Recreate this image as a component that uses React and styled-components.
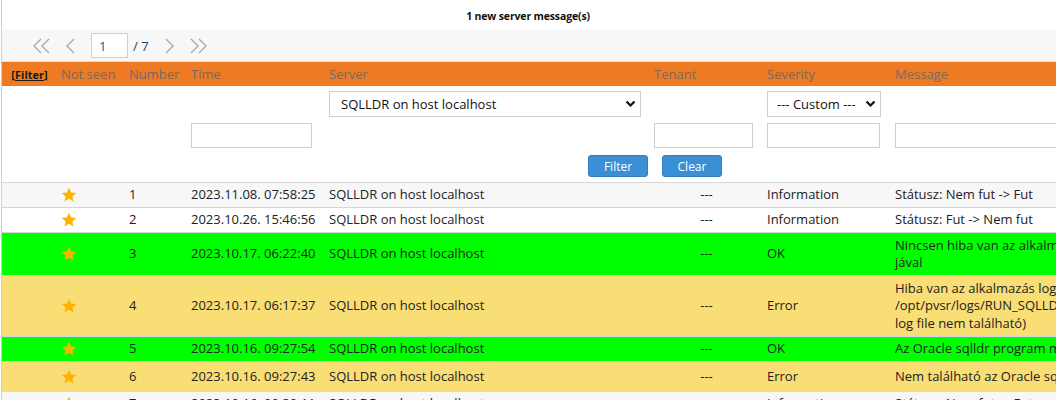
import React from "react";
import styled, { createGlobalStyle } from "styled-components";

const GlobalStyle = createGlobalStyle`
  html, body {
    margin: 0;
    padding: 0;
    background: #fff;
    overflow: hidden;
  }
  body {
    font-family: "Open Sans", "Liberation Sans", sans-serif;
    font-size: 13px;
    color: #222;
  }
`;

const rows = [
  { n: 1, time: "2023.11.08. 07:58:25", sev: "Information", bg: "#f7f7f7", h: 25, msg: ["Státusz: Nem fut -> Fut"] },
  { n: 2, time: "2023.10.26. 15:46:56", sev: "Information", bg: "#ffffff", h: 25, msg: ["Státusz: Fut -> Nem fut"] },
  { n: 3, time: "2023.10.17. 06:22:40", sev: "OK", bg: "#00ff00", h: 43, msg: ["Nincsen hiba van az alkalmazás log file-", "jával"] },
  { n: 4, time: "2023.10.17. 06:17:37", sev: "Error", bg: "#f9dd75", h: 61, msg: ["Hiba van az alkalmazás log file-jával (", "/opt/pvsr/logs/RUN_SQLLDR.log: a", "log file nem található)"] },
  { n: 5, time: "2023.10.16. 09:27:54", sev: "OK", bg: "#00ff00", h: 25, msg: ["Az Oracle sqlldr program megtalálható"] },
  { n: 6, time: "2023.10.16. 09:27:43", sev: "Error", bg: "#f9dd75", h: 30, msg: ["Nem található az Oracle sqlldr program"] },
  { n: 7, time: "2023.10.16. 09:20:11", sev: "Information", bg: "#f7f7f7", h: 25, msg: ["Státusz: Nem fut -> Fut"] },
];

const cols = [55, 68, 62, 138, 325, 113, 128, 417];

export default function App() {
  return (
    <>
      <GlobalStyle />
      <Wrapper>
        <Title>1 new server message(s)</Title>
        <Pager>
          <PagerIcon width="18" height="16" viewBox="0 0 18 16">
            <polyline points="8,1 1,8 8,15" />
            <polyline points="16,1 9,8 16,15" />
          </PagerIcon>
          <PagerIcon width="10" height="16" viewBox="0 0 10 16">
            <polyline points="8,1 1,8 8,15" />
          </PagerIcon>
          <PageInput defaultValue="1" />
          <PageCount>/ 7</PageCount>
          <PagerIcon width="10" height="16" viewBox="0 0 10 16">
            <polyline points="2,1 9,8 2,15" />
          </PagerIcon>
          <PagerIcon width="18" height="16" viewBox="0 0 18 16">
            <polyline points="2,1 9,8 2,15" />
            <polyline points="10,1 17,8 10,15" />
          </PagerIcon>
        </Pager>

        <Table>
          <colgroup>
            {cols.map((w, i) => (
              <col key={i} style={{ width: w }} />
            ))}
          </colgroup>
          <thead>
            <HeadRow>
              <HeadCell $center>
                <FilterLink>
                  [<u>Filter</u>]
                </FilterLink>
              </HeadCell>
              <HeadCell>Not seen</HeadCell>
              <HeadCell>Number</HeadCell>
              <HeadCell>Time</HeadCell>
              <HeadCell>Server</HeadCell>
              <HeadCell>Tenant</HeadCell>
              <HeadCell>Severity</HeadCell>
              <HeadCell>Message</HeadCell>
            </HeadRow>
          </thead>
          <tbody>
            <tr>
              <FilterCell />
              <FilterCell />
              <FilterCell />
              <FilterCell>
                <Slot />
                <TextInput $w={121} />
              </FilterCell>
              <FilterCell>
                <Slot>
                  <SelectWrap $w={312}>
                    <Select defaultValue="sqlldr">
                      <option value="sqlldr">SQLLDR on host localhost</option>
                    </Select>
                    <Caret />
                  </SelectWrap>
                </Slot>
              </FilterCell>
              <FilterCell>
                <Slot />
                <TextInput $w={99} />
              </FilterCell>
              <FilterCell>
                <Slot>
                  <SelectWrap $w={114}>
                    <Select defaultValue="custom" $center>
                      <option value="custom">--- Custom ---</option>
                    </Select>
                    <Caret />
                  </SelectWrap>
                </Slot>
                <TextInput $w={113} />
              </FilterCell>
              <FilterCell>
                <Slot />
                <TextInput $w={300} />
              </FilterCell>
            </tr>
            <tr>
              <ButtonCell colSpan={8}>
                <Button>Filter</Button>
                <Button>Clear</Button>
              </ButtonCell>
            </tr>
            {rows.map((r) => (
              <DataRow key={r.n} $bg={r.bg} $h={r.h}>
                <Cell />
                <Cell>
                  <Star />
                </Cell>
                <Cell>{r.n}</Cell>
                <Cell>{r.time}</Cell>
                <Cell>SQLLDR on host localhost</Cell>
                <Cell $center>---</Cell>
                <Cell>{r.sev}</Cell>
                <Cell>
                  {r.msg.map((line, i) => (
                    <MsgLine key={i}>{line}</MsgLine>
                  ))}
                </Cell>
              </DataRow>
            ))}
          </tbody>
        </Table>
      </Wrapper>
    </>
  );
}

function Star() {
  return (
    <StarSvg width="16" height="16" viewBox="0 0 24 24">
      <path d="M12 1.2l3.2 7 7.6.8-5.7 5.1 1.7 7.6L12 17.8l-6.8 3.9 1.7-7.6-5.7-5.1 7.6-.8z" />
    </StarSvg>
  );
}

function Caret() {
  return (
    <CaretSvg width="11" height="8" viewBox="0 0 11 8">
      <polyline points="1.5,1.5 5.5,5.5 9.5,1.5" />
    </CaretSvg>
  );
}

const Wrapper = styled.div`
  margin-left: 1px;
  border-left: 1px solid #d0d0d0;
  width: 1400px;
  min-height: 400px;
`;

const Title = styled.div`
  width: 1052px;
  height: 30px;
  line-height: 32px;
  text-align: center;
  font-size: 10.5px;
  font-weight: bold;
  letter-spacing: -0.15px;
  color: #111;
`;

const Pager = styled.div`
  height: 31px;
  background: #f7f7f7;
  border-bottom: 1px solid #dcdcdc;
  display: flex;
  align-items: center;
  padding-left: 31px;
`;

const PagerIcon = styled.svg`
  fill: none;
  stroke: #a8a8a8;
  stroke-width: 1.3;
  margin-right: 15px;
`;

const PageInput = styled.input`
  box-sizing: border-box;
  width: 37px;
  height: 25px;
  border: 1px solid #cfcfcf;
  background: #fff;
  font-family: inherit;
  font-size: 13px;
  color: #1f4f8f;
  padding: 0 7px;
  outline: none;
`;

const PageCount = styled.span`
  margin-left: 5px;
  margin-right: 15px;
  color: #2a3f5f;
  font-size: 13px;
`;

const Table = styled.table`
  border-collapse: collapse;
  table-layout: fixed;
  width: 1306px;
`;

const HeadRow = styled.tr`
  background: #ee7b23;
  height: 24px;
`;

const HeadCell = styled.th`
  font-weight: normal;
  text-align: ${(p) => (p.$center ? "center" : "left")};
  color: #766a61;
  font-size: 13px;
  padding: 0 4px;
  white-space: nowrap;
`;

const FilterLink = styled.span`
  font-size: 11px;
  font-weight: bold;
  color: #1a1a1a;
`;

const FilterCell = styled.td`
  vertical-align: top;
  padding: 5px 4px 0;
`;

const Slot = styled.div`
  height: 32px;
`;

const SelectWrap = styled.div`
  position: relative;
  width: ${(p) => p.$w}px;
`;

const Select = styled.select`
  appearance: none;
  box-sizing: border-box;
  width: 100%;
  height: 26px;
  border: 1px solid #cfcfcf;
  border-radius: 0;
  background: #fff;
  font-family: inherit;
  font-size: 13px;
  color: #111;
  padding: 0 24px 0 ${(p) => (p.$center ? "9px" : "11px")};
  outline: none;
`;

const CaretSvg = styled.svg`
  position: absolute;
  right: 5px;
  top: 9px;
  fill: none;
  stroke: #111;
  stroke-width: 2.2;
  pointer-events: none;
`;

const TextInput = styled.input`
  display: block;
  box-sizing: border-box;
  width: ${(p) => p.$w}px;
  height: 25px;
  border: 1px solid #cfcfcf;
  background: #fff;
  outline: none;
`;

const ButtonCell = styled.td`
  text-align: center;
  padding: 7px 0 5px;
  border-bottom: 1px solid #d6d6d6;
`;

const Button = styled.button`
  width: 60px;
  height: 22px;
  margin: 0 7px;
  background: #3a8fd5;
  border: 1px solid #2f7fc4;
  border-radius: 3px;
  color: #fff;
  font-family: inherit;
  font-size: 12px;
  padding: 0;
`;

const DataRow = styled.tr`
  background: ${(p) => p.$bg};
  height: ${(p) => p.$h}px;
  border-bottom: 1px solid #d6d6d6;
`;

const Cell = styled.td`
  padding: 2px 4px;
  line-height: 17.5px;
  text-align: ${(p) => (p.$center ? "center" : "left")};
  white-space: nowrap;
  color: #222;
  vertical-align: middle;
`;

const MsgLine = styled.div``;

const StarSvg = styled.svg`
  display: block;
  margin-left: 0;
  fill: #ffb300;
`;
